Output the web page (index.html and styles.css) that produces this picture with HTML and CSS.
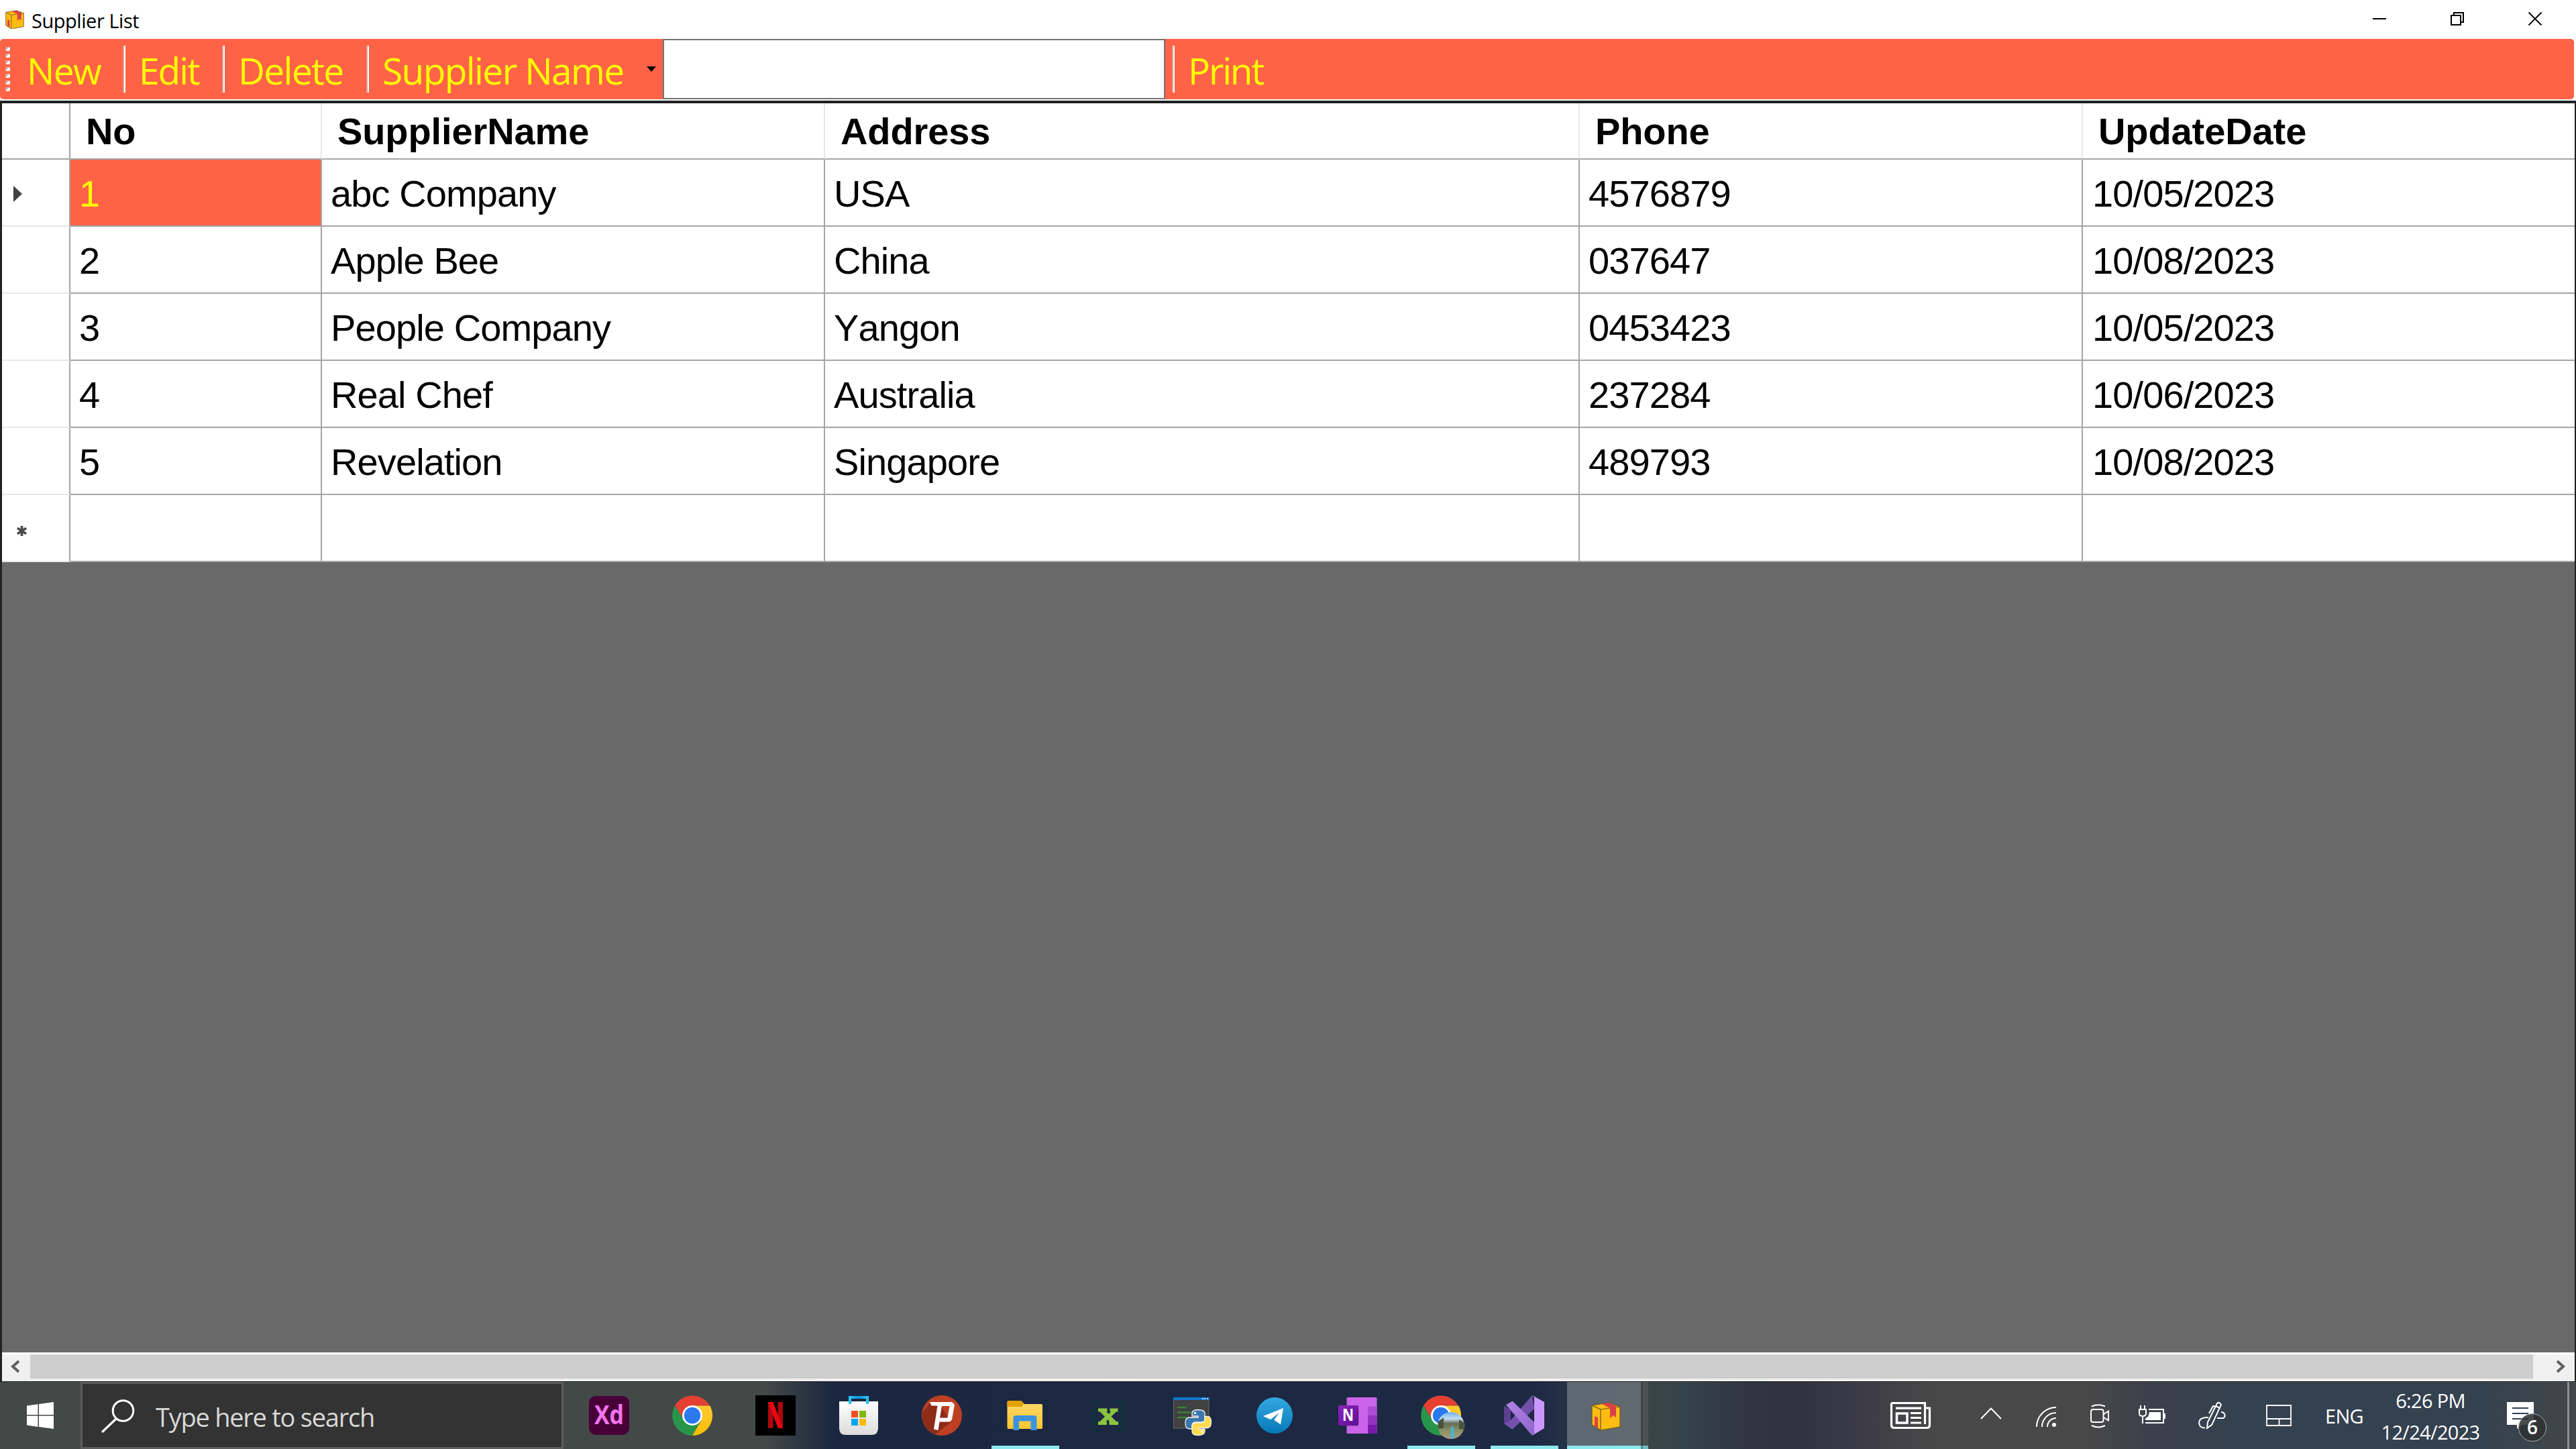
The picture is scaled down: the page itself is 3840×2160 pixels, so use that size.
FILE: index.html
```html
<!DOCTYPE html>
<html lang="en">
<head>
<meta charset="utf-8">
<title>Supplier List</title>
<link rel="stylesheet" href="styles.css">
</head>
<body>
<svg class="defs" width="0" height="0">
  <defs>
    <linearGradient id="g-yellow" x1="0" y1="0" x2="0" y2="1"><stop offset="0" stop-color="#fdcb32"/><stop offset="1" stop-color="#fcbc05"/></linearGradient>
    <linearGradient id="g-store" x1="0" y1="0" x2="0" y2="1"><stop offset="0" stop-color="#fff"/><stop offset="1" stop-color="#dcdcdc"/></linearGradient>
    <linearGradient id="g-handle" x1="0" y1="0" x2="1" y2="0"><stop offset="0" stop-color="#2bc4f5"/><stop offset=".5" stop-color="#0d90ea"/><stop offset="1" stop-color="#2bc4f5"/></linearGradient>
    <linearGradient id="g-folder" x1="0" y1="0" x2="0" y2="1"><stop offset="0" stop-color="#ffd96d"/><stop offset="1" stop-color="#ffc62f"/></linearGradient>
    <linearGradient id="g-telegram" x1="0" y1="0" x2="0" y2="1"><stop offset="0" stop-color="#33a8e0"/><stop offset="1" stop-color="#0779b8"/></linearGradient>
    <linearGradient id="g-note" x1="0" y1="0" x2="1" y2="1"><stop offset="0" stop-color="#8c22bd"/><stop offset="1" stop-color="#5f1091"/></linearGradient>
    <linearGradient id="g-vs" x1="0" y1="0" x2="1" y2="1"><stop offset="0" stop-color="#b483e6"/><stop offset="1" stop-color="#9065cf"/></linearGradient>
    <linearGradient id="g-photo" x1="0" y1="0" x2="0" y2="1"><stop offset="0" stop-color="#6fb2f2"/><stop offset=".25" stop-color="#c4dcf0"/><stop offset=".42" stop-color="#66705a"/><stop offset=".7" stop-color="#8d9266"/><stop offset="1" stop-color="#b29a82"/></linearGradient>
    <symbol id="chrome" viewBox="0 0 60 60">
      <path d="M4 15.500A30 30 0 0 1 56 15.500L30 15.500L17.500 37Z" fill="#e64033"/>
      <path d="M56.300 15.500A30 30 0 0 1 30 60L43.500 37L30 15.500Z" fill="url(#g-yellow)"/>
      <path d="M4 15.500A30 30 0 0 0 30 60L42.500 38L18 38Z" fill="#28964a"/>
      <circle cx="30" cy="30" r="15" fill="#fff"/><circle cx="30" cy="30" r="12.200" fill="#2c79ee"/>
    </symbol>
    <symbol id="parcel" viewBox="0 0 44 42">
      <path d="M1 5L26 1L43 7V37L14 42L1 34Z" fill="#fdbc12"/>
      <path d="M1 5L14 11V42M14 11L43 7M1 5L26 1L43 7V37L14 42L1 34Z" fill="none" stroke="#6d561d" stroke-width="1.200"/>
      <path d="M16 3L26 1L37 6V23L33 20L28 24V9Z" fill="#dc4148"/>
      <path d="M5 21L10 23V39L5 36Z" fill="#dc4148"/>
    </symbol>
  </defs>
</svg>

<div class="screen">
  <header class="titlebar">
    <svg class="title-icon" viewBox="0 0 44 42" preserveAspectRatio="none"><use href="#parcel"/></svg>
    <span class="title-text">Supplier List</span>
    <div class="window-buttons">
      <svg viewBox="0 0 20 20"><path d="M0 10H20" stroke="#000" stroke-width="2"/></svg>
      <svg viewBox="0 0 20 20"><path d="M1 5H15V19H1ZM5 5V1H19V15H15" fill="none" stroke="#000" stroke-width="2"/></svg>
      <svg viewBox="0 0 20 20"><path d="M.5 .5L19.500 19.500M19.500 .5L.5 19.500" stroke="#000" stroke-width="1.800"/></svg>
    </div>
  </header>

  <nav class="toolbar">
    <div class="grip"><i></i><i></i><i></i><i></i><i></i><i></i><i></i></div>
    <button class="tool tool-new">New</button>
    <i class="divider"></i>
    <button class="tool tool-edit">Edit</button>
    <i class="divider"></i>
    <button class="tool tool-delete">Delete</button>
    <i class="divider"></i>
    <button class="tool tool-field">Supplier Name</button>
    <svg class="drop" viewBox="0 0 14 8"><path d="M0 0H14L7 8Z"/></svg>
    <input class="search-field" type="text" aria-label="Supplier Name">
    <i class="divider divider-print"></i>
    <button class="tool tool-print">Print</button>
  </nav>

  <main class="grid-panel">
    <div class="grid">
      <div class="row head"><div class="cell stub"></div><div class="cell">No</div><div class="cell">SupplierName</div><div class="cell">Address</div><div class="cell">Phone</div><div class="cell">UpdateDate</div></div>
      <div class="row"><div class="cell stub"><svg class="pointer" viewBox="0 0 13 24"><path d="M0 0L13 12L0 24Z" fill="#404040"/></svg></div><div class="cell selected">1</div><div class="cell">abc Company</div><div class="cell">USA</div><div class="cell">4576879</div><div class="cell">10/05/2023</div></div>
      <div class="row"><div class="cell stub"></div><div class="cell">2</div><div class="cell">Apple Bee</div><div class="cell">China</div><div class="cell">037647</div><div class="cell">10/08/2023</div></div>
      <div class="row"><div class="cell stub"></div><div class="cell">3</div><div class="cell">People Company</div><div class="cell">Yangon</div><div class="cell">0453423</div><div class="cell">10/05/2023</div></div>
      <div class="row"><div class="cell stub"></div><div class="cell">4</div><div class="cell">Real Chef</div><div class="cell">Australia</div><div class="cell">237284</div><div class="cell">10/06/2023</div></div>
      <div class="row"><div class="cell stub"></div><div class="cell">5</div><div class="cell">Revelation</div><div class="cell">Singapore</div><div class="cell">489793</div><div class="cell">10/08/2023</div></div>
      <div class="row last"><div class="cell stub"><svg class="star" viewBox="0 0 16 16"><path d="M8 0V16M1 3.500L15 12.500M15 3.500L1 12.500" stroke="#4a4a4a" stroke-width="4"/></svg></div><div class="cell"></div><div class="cell"></div><div class="cell"></div><div class="cell"></div><div class="cell"></div></div>
    </div>
    <div class="scrollbar">
      <svg class="arrow arrow-left" viewBox="0 0 16 18"><path d="M13 1L4 9L13 17" fill="none" stroke="#606060" stroke-width="4"/></svg>
      <div class="thumb"></div>
      <svg class="arrow arrow-right" viewBox="0 0 16 18"><path d="M3 1L12 9L3 17" fill="none" stroke="#606060" stroke-width="4"/></svg>
    </div>
  </main>

  <footer class="taskbar">
    <div class="start"><svg viewBox="0 0 40 40"><path d="M0 5.500L16.500 3.200V19H0ZM18 3L40 0V19H18ZM0 20.500H16.500V37L0 34.500ZM18 20.500H40V40L18 37Z" fill="#fff"/></svg></div>
    <div class="search">
      <svg viewBox="0 0 50 50"><circle cx="32.500" cy="17" r="15.300" fill="none" stroke="#fff" stroke-width="3"/><path d="M22 29L2 48" stroke="#fff" stroke-width="3.200" stroke-linecap="round"/></svg>
      <span class="search-text">Type here to search</span>
    </div>
    <div class="apps">
      <div class="app"><svg viewBox="0 0 60 60"><rect y="1" width="60" height="58" rx="10" fill="#470137"/><text class="xd" x="8" y="43" textLength="44" lengthAdjust="spacingAndGlyphs">Xd</text></svg></div>
      <div class="app"><svg viewBox="0 0 60 60"><use href="#chrome"/></svg></div>
      <div class="app"><svg viewBox="0 0 60 60"><path d="M0 0H60V60H0Z"/><path d="M19 10H26.500V48.500L19 49ZM33.500 10H41V49L33.500 48.500Z" fill="#b1060f"/><path d="M19 10H26.500L41 49.500L33.500 48.500Z" fill="#e50914"/></svg></div>
      <div class="app"><svg viewBox="0 0 60 60"><path d="M1 9H59V49Q59 59 49 59H11Q1 59 1 49Z" fill="url(#g-store)"/><path d="M17 13V3H43V13" fill="none" stroke="url(#g-handle)" stroke-width="4"/><path d="M19 23H29V33H19Z" fill="#f25022"/><path d="M31 23H41V33H31Z" fill="#7fba00"/><path d="M19 35H29V45H19Z" fill="#00a4ef"/><path d="M31 35H41V45H31Z" fill="#ffb900"/></svg></div>
      <div class="app"><svg viewBox="0 0 60 60"><circle cx="30" cy="30" r="30" fill="#bd4022"/><path d="M13 11L1 26A30 30 0 0 0 20 58L44 40L30 18Z" fill="#8e2c18"/><path d="M12 10H45L49 14L45 36L42 39.500H26.500L24.500 52L18 50.500L23.500 15.500H14.500ZM30 16L27 33.500H38.500L41.500 16Z" fill="#fff" fill-rule="evenodd"/></svg></div>
      <div class="app open"><svg viewBox="0 0 60 60"><path d="M3.500 10Q3.500 8 5.500 8H24L29 13H54Q56 13 56 15V48Q56 50 54 50H5.500Q3.500 50 3.500 48Z" fill="url(#g-folder)"/><path d="M3.500 10Q3.500 8 5.500 8H24L28.500 12.500L25 17H3.500Z" fill="#e3a100"/><path d="M12.500 52V34Q12.500 30 16.500 30H43.500Q47.500 30 47.500 34V52H38.500V38.500H21V52Z" fill="#3b94dd"/></svg></div>
      <div class="app"><svg viewBox="0 0 60 60"><path d="M16 8Q7 9 8 20V41Q7 53 16 54M44 8Q53 9 52 20V41Q53 53 44 54" fill="none" stroke="#0d303b" stroke-width="5"/><path d="M15 19.500H28.500V24H27L31 28L34 24H32.500V19.500H44.500V24.500H42L34.500 31.500L42 39H45V44H31.500V39.500H32L29.500 36L26.500 39.500H28V44H15V39H17.500L25 32L18 24.500H15Z" fill="#8bc53f"/></svg></div>
      <div class="app"><svg viewBox="0 0 60 60"><path d="M3.500 3.500H56V49H3.500Z" fill="#414141" stroke="#6b6b6b"/><path d="M3 3H56.500V7H3Z" fill="#0c77cc"/><path d="M46 5H48M49 5H51M53 5H55" stroke="#b8dafa" stroke-width="2"/><path d="M9 18H22M9 25.500H30M9 33H23" stroke="#3b8132" stroke-width="2.600"/>
        <path d="M40 21.500Q31 21.500 31 27V31H40V33H27Q21 33 21 41Q21 50 27 50H31V45Q31 40 37 40H45Q50 40 50 35V27Q50 21.500 40 21.500Z" fill="#3a77ac" stroke="#f4f4f4" stroke-width="1.300"/><path d="M41 59.500Q50 59 50 54V50.500H41V48.500H54Q59.500 48 59.500 40Q59.500 31.500 54 31.500H50V36Q50 41 44 41H36Q31 41 31 46V54Q31 59.500 41 59.500Z" fill="#ffda4c" stroke="#f4f4f4" stroke-width="1.300"/><circle cx="35.500" cy="26.500" r="1.700" fill="#fff"/><circle cx="45.500" cy="54" r="1.700" fill="#fff"/></svg></div>
      <div class="app"><svg viewBox="0 0 60 60"><circle cx="30" cy="30" r="27" fill="url(#g-telegram)"/><path d="M13 31L43 19L39 43.500L29 36.500L37 26L24 36Z" fill="#fff"/></svg></div>
      <div class="app"><svg viewBox="0 0 60 60"><rect x="13.500" y="3" width="45" height="54" rx="1.500" fill="#ca64ea"/><path d="M45 16.500H58.500V30H45Z" fill="#ae4bd5"/><path d="M45 30H58.500V44H45Z" fill="#9332bf"/><path d="M45 44H58.500V55.500L57 57H45Z" fill="#7719aa"/><rect x="1" y="15" width="30" height="30" rx="2" fill="url(#g-note)"/><path class="note-shade" d="M2 45.800H31V17"/><text class="note" x="7" y="38" textLength="17" lengthAdjust="spacingAndGlyphs">N</text></svg></div>
      <div class="app open"><svg viewBox="0 0 60 60"><use href="#chrome"/><circle cx="45" cy="45" r="20" fill="url(#g-photo)"/><path d="M26 39L34 33V49L26 50ZM57 36L64 41V51L57 50Z" fill="#48553b"/><path d="M45 47H49L50 64H44Z" fill="#43b8cc"/></svg></div>
      <div class="app open"><svg viewBox="0 0 60 60"><path d="M0 16L10 21V41L0 42Z" fill="#5d3f91"/><path d="M0 42L10 37L42 0L45 20L12.500 51Z" fill="#7350ab"/><path d="M0 16L12.500 8.500L45 40V57L42 60L3 14Z" fill="url(#g-vs)"/><path d="M42 0L60 10V49L42 60L45 57V3Z" fill="#cb96fb"/></svg></div>
      <div class="app open active"><svg class="parcel-app" viewBox="0 0 44 42"><use href="#parcel"/></svg></div>
    </div>
    <div class="tray">
      <svg class="news" viewBox="0 0 60 40"><path d="M1.500 1.500H51.500V33M51.500 9H58.500V34Q58.500 38.500 54 38.500H6Q1.500 38.500 1.500 34V1.500" fill="none" stroke="#fff" stroke-width="3.200"/><path d="M8 9.200H46M30 16.500H46M30 23.500H46M30 31H46" stroke="#fff" stroke-width="3.200"/><path d="M9.500 17H25V31H9.500Z" fill="none" stroke="#fff" stroke-width="3.600"/></svg>
      <svg class="up" viewBox="0 0 32 18"><path d="M1 17L16 1.500L31 17" fill="none" stroke="#fff" stroke-width="2"/></svg>
      <svg class="wifi" viewBox="0 0 30 30"><path d="M1 30A29 29 0 0 1 30 1M9 30A21 21 0 0 1 30 9M17 30A13 13 0 0 1 30 17" fill="none" stroke="#fff" stroke-width="2"/><circle cx="27" cy="27" r="3" fill="#fff"/></svg>
      <svg class="cam" viewBox="0 0 28 36"><rect x="1" y="8" width="18.500" height="19" rx="3" fill="none" stroke="#fff" stroke-width="2"/><path d="M20 15L27 10.500V24.500L20 20M2 3.500Q12 -1 22 3.500M2 32Q12 37 22 32" fill="none" stroke="#fff" stroke-width="2"/></svg>
      <svg class="battery" viewBox="0 0 40 28"><path d="M3 0V6M9 0V6M6 16V27" stroke="#fff" stroke-width="2"/><path d="M1 6H11V12Q11 16 6 16Q1 16 1 12Z" fill="none" stroke="#fff" stroke-width="2"/><path d="M15 6H37V26H10" fill="none" stroke="#fff" stroke-width="2"/><path d="M16 10H33V22H10V19Q14 18 15 14ZM37 12H40V20H37Z" fill="#fff"/></svg>
      <svg class="pen" viewBox="0 0 41 40"><path d="M14 30L28 2Q31 -1 34 4L20 34L13 39ZM26 6L32 9M16 17L22 6L26 7" fill="none" stroke="#fff" stroke-width="2"/><path d="M15 23H11Q1 24 1 31Q2 39 10 38.500M28 24H37Q41 22 39 18Q38 15 34 15" fill="none" stroke="#fff" stroke-width="2"/></svg>
      <svg class="pad" viewBox="0 0 38 32"><path d="M1 1H37V31H1ZM1 21H37M19.500 21V31" fill="none" stroke="#fff" stroke-width="1.800"/></svg>
      <span class="lang">ENG</span>
      <div class="clock"><span class="time">6:26 PM</span><span class="date">12/24/2023</span></div>
      <div class="notice"><svg viewBox="0 0 40 40"><path d="M0 0H40V34H22L15 40V34H0Z" fill="#fff"/><path d="M8 9H32M8 17H32M8 25H32" stroke="#34414f" stroke-width="2"/></svg><span class="badge">6</span></div>
      <i class="desktop-edge"></i>
    </div>
  </footer>
</div>
</body>
</html>
```
FILE: styles.css
```css
* { box-sizing: border-box; }
body { margin: 0; background: #fff; }
svg { display: block; flex: none; overflow: visible; }
.defs { position: absolute; }
.screen {
  width: 3840px; height: 2160px; overflow: hidden;
  display: flex; flex-direction: column;
  font-family: "Open Sans", "Noto Sans", sans-serif;
}

/* Title bar */
.titlebar { height: 58px; flex: none; display: flex; align-items: center; padding-left: 8px; }
.title-icon { width: 28px; height: 28px; }
.title-text { margin-left: 11px; font-size: 29px; letter-spacing: -0.45px; line-height: 58px; padding-top: 3px; }
.window-buttons { margin-left: auto; display: flex; gap: 96px; padding-right: 51px; padding-bottom: 2px; }
.window-buttons svg { width: 20px; height: 20px; }

/* Toolbar */
.toolbar {
  height: 90px; flex: none; margin-right: 3px; display: flex; align-items: center;
  background: #ff6347; border-radius: 5px;
}
.grip { display: flex; flex-direction: column; gap: 4px; margin-left: 8px; width: 7px; }
.grip i { width: 7px; height: 6px; border-radius: 2px; background: linear-gradient(135deg, #c9b5b1 40%, #fff 50%); }
.tool {
  border: 0; padding: 0; margin-top: 4px; background: none; color: #ff0; text-align: left;
  font: 55px/80px "Open Sans", "Noto Sans", sans-serif; letter-spacing: -1.6px; white-space: nowrap; flex: none;
}
.grip + .tool { margin-left: 25px; }
.tool-new { width: 143px; }
.tool-edit { width: 124px; letter-spacing: -2px; }
.tool-delete { width: 191px; }
.tool-field { width: 394px; }
.tool-print { letter-spacing: -2.2px; }
.divider { width: 4px; height: 70px; flex: none; margin-right: 20px; background: linear-gradient(90deg, #d9a196 50%, #fff 50%); }
.divider-print { margin-left: 10px; }
.drop { width: 14px; height: 8px; margin-right: 10px; }
.search-field { width: 749px; height: 90px; flex: none; border: 2px solid #747474; background: #fff; padding: 0 10px; font-size: 55px; }

/* Data grid */
.grid-panel {
  flex: 1; display: flex; flex-direction: column; margin-top: 2px; background: #696969;
  border: solid #1f2222; border-width: 4px 2px 1px 3px;
}
.row { display: grid; grid-template-columns: 102px 375px 750px 1125px 750px 1fr; grid-template-rows: 100%; height: 100px; }
.cell {
  border: solid #a5a5a5; border-width: 0 2px 2px 0; background: #fff; padding-left: 13px;
  font: 56px/101px "Liberation Sans", Arial, sans-serif; letter-spacing: -0.9px; font-kerning: none; white-space: nowrap; color: #000;
}
.cell:last-child { border-right: 0; padding-left: 14px; }
.head { height: 84px; }
.head .cell { font-weight: bold; line-height: 84px; padding-left: 23px; letter-spacing: -0.1px; border-right-color: #e6e6e6; }
.row .stub, .head .stub { border-right-color: #a5a5a5; padding-left: 17px; display: flex; align-items: center; }
.row:not(.head) .stub { border-bottom-color: #e8e8e8; }
.last .stub { padding-left: 22px; }
.selected { background: #ff6347; color: #ff0; }
.pointer { width: 13px; height: 24px; margin-top: 4px; }
.star { width: 15px; height: 15px; margin-top: 8px; }
.scrollbar { margin-top: auto; height: 43px; display: flex; align-items: flex-start; background: #f0f0f0; border-top: 3px solid #fff; }
.thumb { flex: 1; height: 36px; background: #cdcdcd; }
.arrow { width: 16px; height: 18px; margin-top: 9px; }
.arrow-left { margin-left: 12px; margin-right: 14px; }
.arrow-right { margin-left: 33px; margin-right: 13px; }

/* Taskbar */
.taskbar {
  height: 100px; flex: none; display: flex; color: #fff;
  background: linear-gradient(90deg, #434947 0, #434947 1140px, #2e3844 1190px, #1b2740 1245px, #1e2a44 2290px, #2f3c48 2400px, #394446 2457px, #35434a 2510px, #303543 2600px, #32313f 2680px, #3a3946 2760px, #434247 2830px, #484848 2890px, #484848 3110px, #3d404b 3200px, #34414f 3330px, #34414f 3700px, #414749 3830px);
}
.start { width: 120px; padding: 30px 40px; }
.start svg { width: 40px; height: 40px; }
.search { width: 720px; background: #333; border: 3px solid #5c5c5c; display: flex; align-items: center; padding-left: 28px; }
.search svg { width: 50px; height: 50px; margin-top: 1px; }
.search-text { margin-left: 31px; font-size: 38px; color: #d8d8d8; letter-spacing: -1.25px; margin-top: 3px; white-space: nowrap; }
.apps { display: flex; margin-left: 6px; }
.app { width: 124px; height: 100px; padding: 20px 32px; }
.app svg { width: 60px; height: 60px; }
.open { background: linear-gradient(#8be8ec, #8be8ec) 12px 95px / 101px 5px no-repeat; }
.active {
  padding-left: 36px;
  background: linear-gradient(90deg, #8be8ec 110px, #578e90 110px, #578e90 113px, #70bcc0 113px) 2px 95px / 121px 5px no-repeat, linear-gradient(90deg, transparent 2px, #5d6873 2px, #626a70 112px, #3d4547 112px, #3d4547 115px, #4b5252 115px, #4b5252 123px, transparent 123px);
}
.app .parcel-app { width: 44px; height: 42px; margin: 10px 0 0 2px; }
.xd { font: bold 39px "Open Sans", sans-serif; fill: #f573f0; }
.note { font: bold 25px "Open Sans", sans-serif; fill: #fff; }
.note-shade { fill: none; stroke: #000; stroke-opacity: .2; }

.tray { margin-left: auto; display: flex; align-items: flex-start; }
.news { width: 60px; height: 40px; margin: 30px 74px 0 0; }
.up { width: 32px; height: 18px; margin: 38px 51px 0 0; }
.wifi { width: 30px; height: 30px; margin: 37px 51px 0 0; }
.cam { width: 28px; height: 36px; margin: 33px 44px 0 0; }
.battery { width: 40px; height: 28px; margin: 35px 49px 0 0; }
.pen { width: 41px; height: 40px; margin: 30px 60px 0 0; }
.pad { width: 38px; height: 32px; margin: 34px 48px 0 0; }
.lang { width: 60px; font-size: 29px; line-height: 40px; margin: 31px 7px 0 2px; letter-spacing: -0.7px; }
.clock { width: 180px; display: flex; flex-direction: column; align-items: center; font-size: 29px; line-height: 47px; letter-spacing: -0.7px; padding-top: 4px; margin-right: 24px; }
.notice { position: relative; width: 90px; height: 100px; padding-top: 30px; }
.notice svg { width: 40px; height: 40px; }
.badge {
  position: absolute; left: 17px; top: 47px; width: 42px; height: 42px; border-radius: 50%;
  border: 1.5px solid #aaa; background: rgba(48, 50, 52, .88); text-align: center; font: 600 28px/39px "Open Sans", sans-serif;
}
.desktop-edge { width: 13px; height: 100px; border-left: 3px solid #8b9094; }
```
